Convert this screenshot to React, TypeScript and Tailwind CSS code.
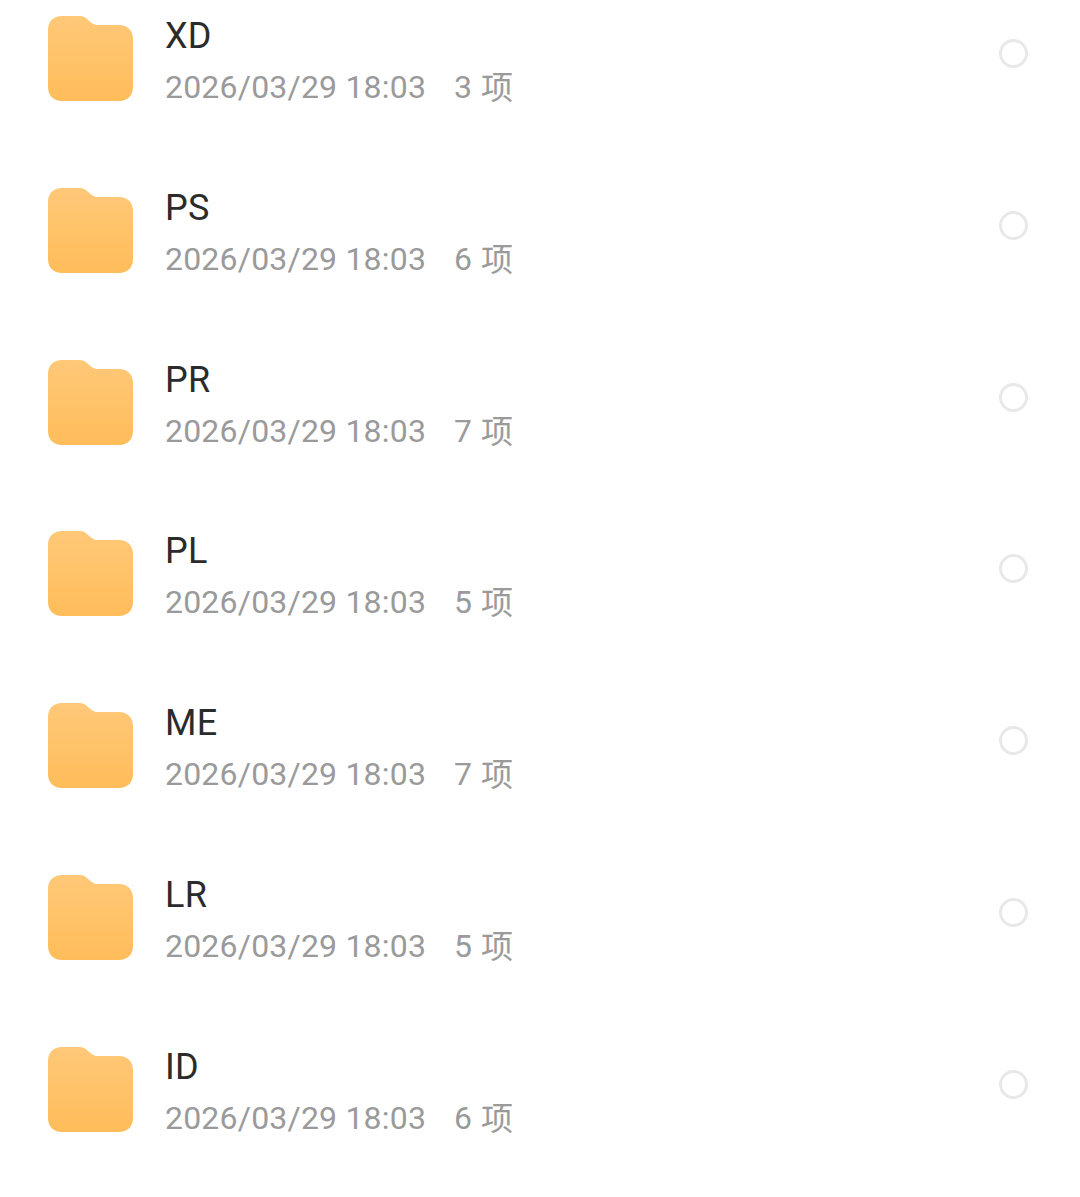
const rows = [
  ["XD", "3"],
  ["PS", "6"],
  ["PR", "7"],
  ["PL", "5"],
  ["ME", "7"],
  ["LR", "5"],
  ["ID", "6"],
];

function Folder() {
  return (
    <svg width="86" height="86" viewBox="0 0 86 86" className="shrink-0">
      <defs>
        <linearGradient id="folderFill" x1="0" y1="0" x2="0" y2="1">
          <stop offset="0" stopColor="#ffc878" />
          <stop offset="1" stopColor="#ffbd5a" />
        </linearGradient>
      </defs>
      <path
        d="M14 0 H31 C35 0 37 1 39 3 L43 6.5 C45.5 8.5 47.5 9 50 9 H71 C79.5 9 85 14.5 85 23 V71 C85 79.5 79.5 85 71 85 H14 C5.5 85 0 79.5 0 71 V14 C0 5.5 5.5 0 14 0 Z"
        fill="url(#folderFill)"
      />
    </svg>
  );
}

export default function App() {
  return (
    <div className="h-[1197px] w-[1080px] overflow-hidden bg-white pt-4 font-['Roboto','Noto_Sans_CJK_SC',sans-serif]">
      {rows.map(([name, count]) => (
        <div key={name} className="flex h-[171.75px] items-start pl-12 pr-[52px]">
          <Folder />
          <div className="ml-[31px] flex-1">
            <div className="-mt-[1px] h-[42px] text-[36px] leading-[42px] tracking-[0.3px] text-[#2b2b2b]">{name}</div>
            <div className="mt-[11px] flex text-[32px] leading-[38px] text-[#9a9a9a]">
              <span className="w-[289px] tracking-[0.2px]">2026/03/29 18:03</span>
              <span>{count}</span>
              <span className="ml-[9px] mt-[1px]">项</span>
            </div>
          </div>
          <div className="mt-[23px] size-[29px] rounded-full border-[3.5px] border-[#e8e8e8]" />
        </div>
      ))}
    </div>
  );
}
